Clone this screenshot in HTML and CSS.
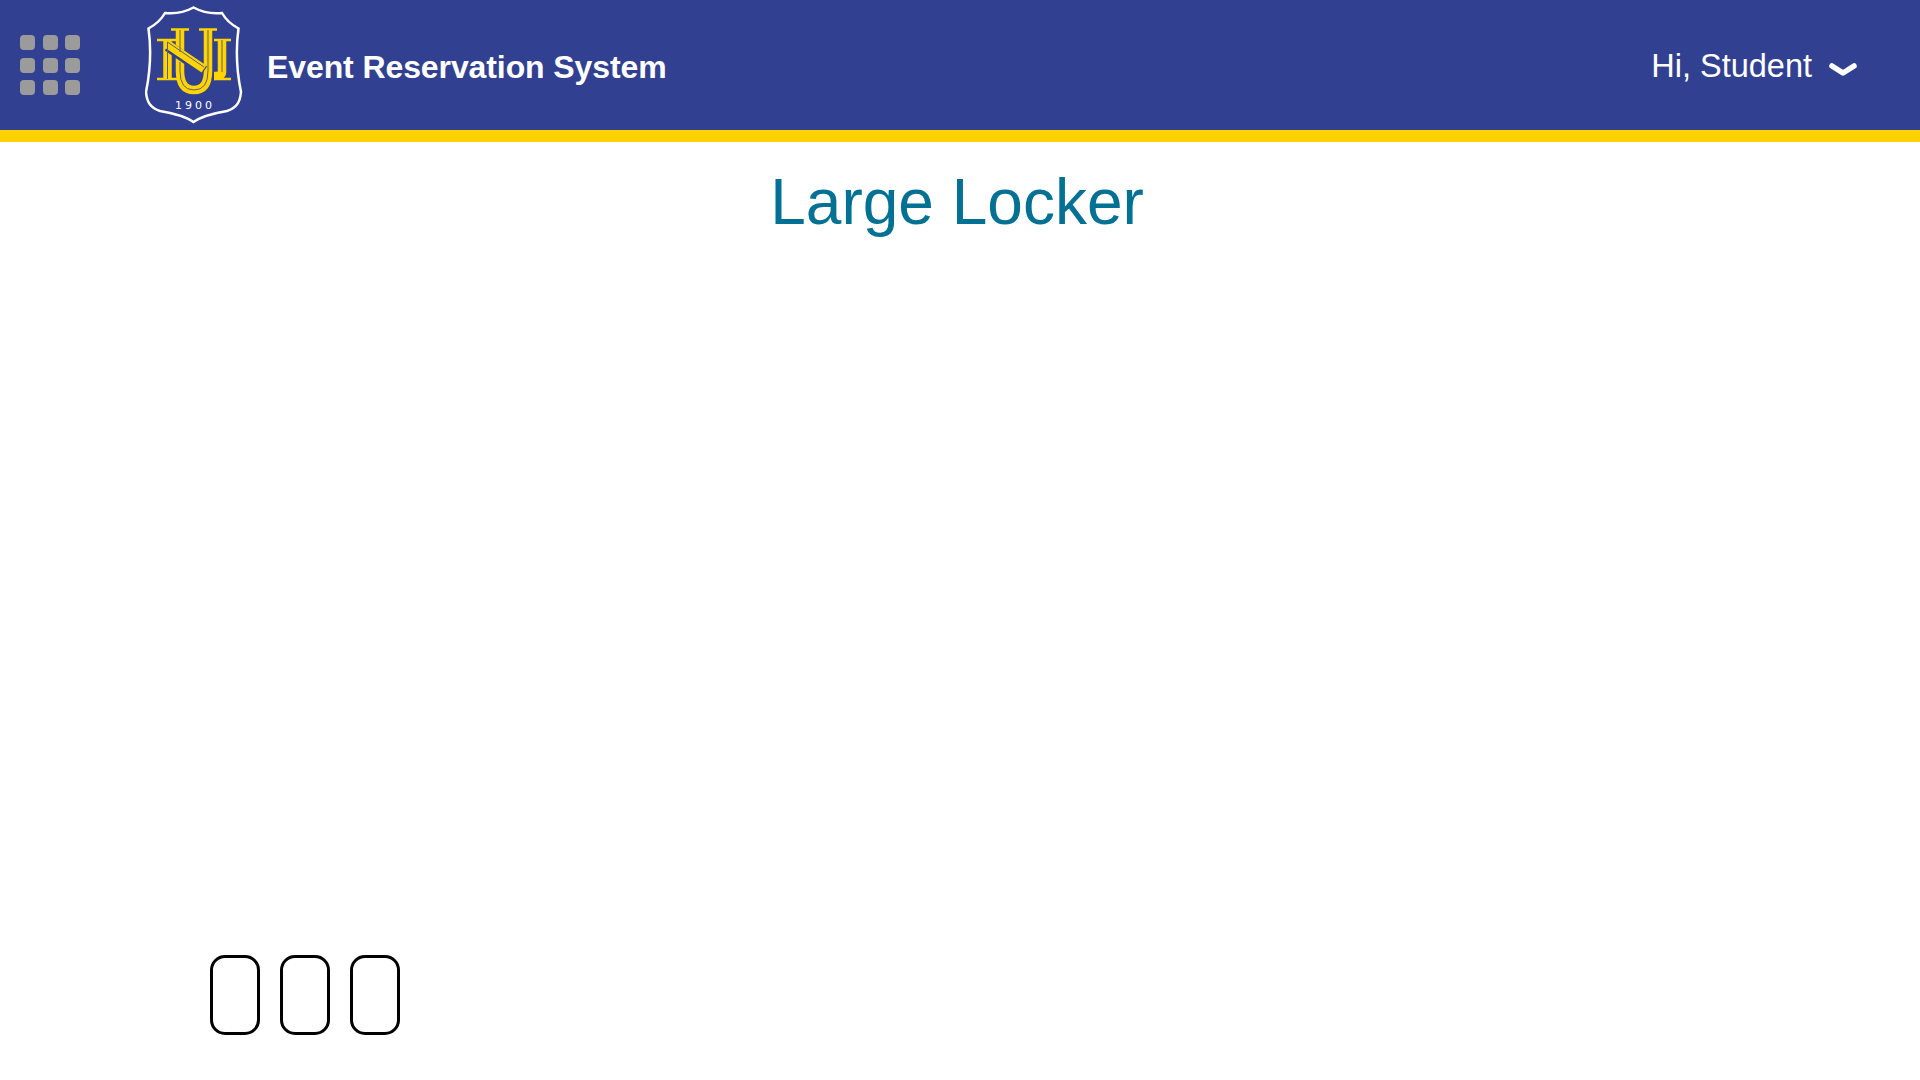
FILE: index.html
```html
<!DOCTYPE html>
<html>
<head>
	<meta charset="utf-8">
	<title>Large Locker</title>
	<link rel="stylesheet" href="styles.css">
</head>
<body>
<div class="page">
	<div class="header">
		<div class="apps">
			<span></span><span></span><span></span>
			<span></span><span></span><span></span>
			<span></span><span></span><span></span>
		</div>
		<!-- shield logo, drawn in page pixels -->
		<svg class="logo" viewBox="145 6 98 118">
			<path class="shield" d="M193.500 7.500C187 11 178 14.500 165 13C161 20 155 25 148.500 28.500C151.500 50 150.500 70 146 92C147 103 151 108 160 111C172 113 185 116 193.500 122C202 116 215 113 227 111C236 108 240 103 241 92C236.500 70 235.500 50 238.500 28.500C232 25 226 20 222 13C209 14.500 200 11 193.500 7.500Z"/>
			<path class="mono" d="M222 40V72Q222 76 214 76"/>
			<path class="mono" d="M167.500 40V79"/>
			<path class="mono" d="M180 30V71Q180 90 194 90Q208 90 208 71V30"/>
			<path class="gap" d="M168 46L204 71"/>
			<path class="mono" d="M167 44L204 69"/>
			<path class="serif" d="M157 40H176M157 79H178M171 29.500H189M199 29.500H217M214 40H231M214 79H231"/>
			<path class="inner" d="M167.500 79V42L204 67"/>
			<path class="inner" d="M180 30V52M180 62V71Q180 90 194 90Q208 90 208 71V30"/>
			<path class="inner" d="M222 40V72"/>
			<text class="year" x="195" y="108.500" text-anchor="middle">1900</text>
		</svg>
		<div class="title">Event Reservation System</div>
		<div class="user">
			<span>Hi, Student</span>
			<svg class="chevron" viewBox="0 0 28 14"><path d="M3 3L14 10L25 3"/></svg>
		</div>
	</div>
	<div class="main">
		<h1>Large Locker</h1>
		<div class="lockers">
			<div class="locker"></div>
			<div class="locker"></div>
			<div class="locker"></div>
		</div>
	</div>
</div>
</body>
</html>
```

FILE: styles.css
```css
html, body { margin: 0; padding: 0; }
body {
	background: #fff;
	font-family: "Liberation Sans", Arial, sans-serif;
}
.page {
	display: flex;
	flex-direction: column;
	height: 100vh;
}

.header {
	display: flex;
	align-items: center;
	height: 130px;
	padding: 0 63px 0 20px;
	background: #324091;
	border-bottom: 12px solid #ffd100;
	color: #fff;
}
.apps {
	display: grid;
	grid-template-columns: repeat(3, 15px);
	grid-auto-rows: 15px;
	gap: 7.500px;
	margin-right: 65px;
}
.apps span {
	background: #9b9b9b;
	border-radius: 4px;
}
.logo {
	width: 98px;
	height: 118px;
	margin-right: 24px;
}
.shield { fill: none; stroke: #fff; stroke-width: 2.500; }
.mono { fill: none; stroke: #ffd400; stroke-width: 8.500; }
.gap { fill: none; stroke: #324091; stroke-width: 11; }
.serif { fill: none; stroke: #ffd400; stroke-width: 2.500; }
.inner { fill: none; stroke: #5b5f86; stroke-width: 1; }
.year {
	fill: #fff;
	font-family: "DejaVu Sans", sans-serif;
	font-size: 11px;
	letter-spacing: 3px;
}
.title {
	margin-top: 4px;
	font-size: 32px;
	font-weight: bold;
	letter-spacing: -0.100px;
}
.user {
	display: flex;
	align-items: center;
	gap: 17px;
	margin-left: auto;
	margin-top: 2px;
	font-size: 32.500px;
}
.chevron {
	width: 28px;
	height: 14px;
	margin-top: 8px;
}
.chevron path {
	fill: none;
	stroke: #fff;
	stroke-width: 5.500;
	stroke-linecap: round;
	stroke-linejoin: round;
}

.main {
	display: flex;
	flex-direction: column;
	flex: 1;
	padding: 0 210px 45px;
}
h1 {
	margin: 21px 0 0;
	padding-right: 6px;
	font-size: 64px;
	font-weight: normal;
	line-height: 78px;
	text-align: center;
	color: #037193;
}
.lockers {
	display: flex;
	gap: 20px;
	margin-top: auto;
}
.locker {
	box-sizing: border-box;
	width: 50px;
	height: 80px;
	border: 3px solid #000;
	border-radius: 15px;
}
```
